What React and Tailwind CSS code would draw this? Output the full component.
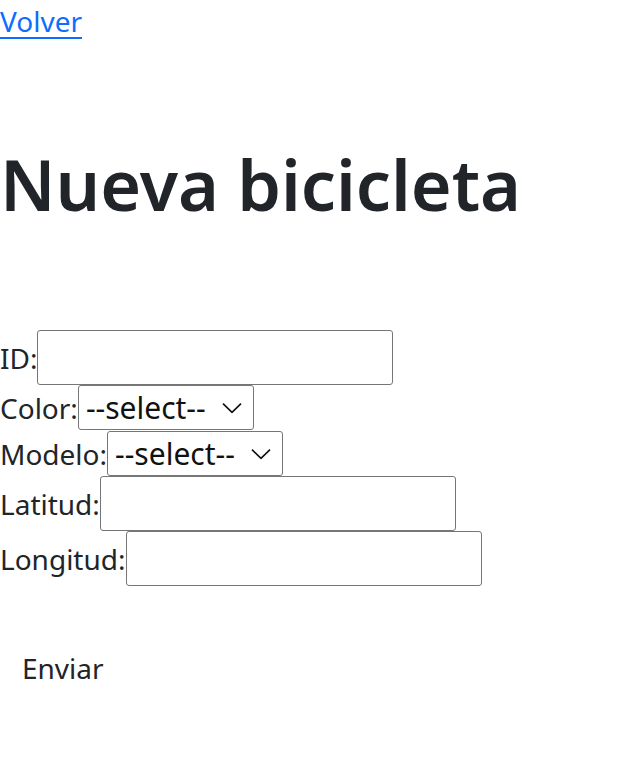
import React from "react";

function Chevron() {
  return (
    <svg
      className="pointer-events-none absolute right-[12px] top-1/2 -translate-y-1/2"
      width="20"
      height="11"
      viewBox="0 0 20 11"
      fill="none"
    >
      <path d="M1 1.2 L10 9.8 L19 1.2" stroke="#111" strokeWidth="1.6" />
    </svg>
  );
}

function SelectBox({ id }) {
  return (
    <span className="relative inline-flex">
      <select
        id={id}
        defaultValue=""
        className="appearance-none h-[45px] w-[176px] rounded-[3px] border border-[#767676] bg-white pl-[7px] pr-[36px] text-[30px] leading-[42px] text-[#111] outline-none"
      >
        <option value="">--select--</option>
      </select>
      <Chevron />
    </span>
  );
}

function TextRow({ label, id }) {
  return (
    <div className="flex items-center h-[55px]">
      <label htmlFor={id}>{label}</label>
      <input
        id={id}
        type="text"
        className="h-[55px] w-[356px] rounded-[3px] border border-[#767676] bg-white px-[2px] outline-none"
      />
    </div>
  );
}

export default function App() {
  return (
    <div className="min-h-[780px] bg-white font-['Noto_Sans',sans-serif] text-[28px] leading-[42px] text-[#212529]">
      <a href="#" className="text-[#0d6efd] underline underline-offset-[5px] decoration-[2px]">
        Volver
      </a>

      <h1 className="mt-[100px] mb-[104px] text-[70px] font-semibold leading-[84px]">Nueva bicicleta</h1>

      <form>
        <TextRow label="ID:" id="id" />
        <div className="flex items-center h-[45px]">
          <label htmlFor="color">Color:</label>
          <SelectBox id="color" />
        </div>
        <div className="flex items-center h-[45px] mt-[1px]">
          <label htmlFor="modelo">Modelo:</label>
          <SelectBox id="modelo" />
        </div>
        <TextRow label="Latitud:" id="lat" />
        <TextRow label="Longitud:" id="lng" />

        <button
          type="button"
          className="mt-[50px] rounded-[6px] border border-transparent px-[21px] py-[10px] leading-[42px]"
        >
          Enviar
        </button>
      </form>
    </div>
  );
}
